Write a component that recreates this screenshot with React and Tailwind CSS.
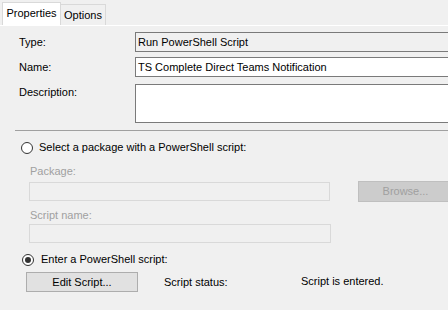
import React from "react";

function Radio({ checked }) {
  return (
    <span className="relative flex h-[12px] w-[12px] shrink-0 items-center justify-center rounded-full border border-[#333333] bg-white">
      {checked && <span className="h-[6px] w-[6px] rounded-full bg-[#333333]" />}
    </span>
  );
}

export default function App() {
  return (
    <div
      className="h-[310px] w-[448px] overflow-hidden bg-[#f0f0f0] text-[11px] leading-[13px] text-black"
      style={{ fontFamily: '"Liberation Sans", Arial, sans-serif' }}
    >
      {/* tab strip */}
      <div className="flex h-[25px] items-end bg-[#f0f0f0] pl-[2px]">
        <div className="flex h-[23px] w-[59px] shrink-0 items-start justify-center border border-b-0 border-[#d9d9d9] bg-white pt-[4px]">
          Properties
        </div>
        <div className="flex h-[21px] w-[45px] shrink-0 items-start justify-center border border-b-0 border-l-0 border-[#d9d9d9] bg-[#f0f0f0] pt-[4px]">
          Options
        </div>
      </div>

      {/* panel */}
      <div className="border-t border-white pt-[6px]">
        <div className="flex h-[20px] items-center">
          <span className="w-[135px] shrink-0 pl-[19px]">Type:</span>
          <div className="flex h-[20px] w-[330px] shrink-0 items-center border border-[#7a7a7a] bg-[#f0f0f0] pl-[2px]">
            Run PowerShell Script
          </div>
        </div>
        <div className="mt-[5px] flex h-[20px] items-center">
          <span className="w-[135px] shrink-0 pl-[19px]">Name:</span>
          <div className="flex h-[20px] w-[330px] shrink-0 items-center border border-[#7a7a7a] bg-white pl-[2px]">
            TS Complete Direct Teams Notification
          </div>
        </div>
        <div className="mt-[7px] flex h-[39px] items-start">
          <span className="w-[135px] shrink-0 pl-[19px] pt-[2px]">Description:</span>
          <div className="h-[39px] w-[330px] shrink-0 border border-[#7a7a7a] bg-white" />
        </div>

        <div className="ml-[15px] mt-[7px] h-0 border-t border-[#a0a0a0]" />

        <div className="mt-[10px] flex h-[13px] items-center gap-[6px] pl-[21px]">
          <Radio />
          <span>Select a package with a PowerShell script:</span>
        </div>

        <div className="mt-[11px] h-[13px] pl-[30px] text-[#a0a0a0]">Package:</div>
        <div className="mt-[3px] flex h-[21px] items-center">
          <div className="ml-[29px] h-[19px] w-[301px] shrink-0 border border-[#d9d9d9] bg-[#f0f0f0]" />
          <div className="ml-[28px] flex h-[21px] w-[95px] shrink-0 items-center justify-center border border-[#bfbfbf] bg-[#cccccc] text-[#a0a0a0]">
            Browse...
          </div>
        </div>
        <div className="mt-[7px] h-[13px] pl-[30px] text-[#a0a0a0]">Script name:</div>
        <div className="ml-[29px] mt-[2px] h-[19px] w-[302px] border border-[#d9d9d9] bg-[#f0f0f0]" />

        <div className="mt-[10px] flex h-[13px] items-center gap-[7px] pl-[22px]">
          <Radio checked />
          <span>Enter a PowerShell script:</span>
        </div>

        <div className="mt-[6px] flex h-[20px] items-center">
          <div className="ml-[26px] flex h-[20px] w-[112px] shrink-0 items-center justify-center border border-[#adadad] bg-[#e1e1e1]">
            Edit Script...
          </div>
          <span className="ml-[26px] w-[137px] shrink-0">Script status:</span>
          <span className="-mt-[2px]">Script is entered.</span>
        </div>
      </div>
    </div>
  );
}
